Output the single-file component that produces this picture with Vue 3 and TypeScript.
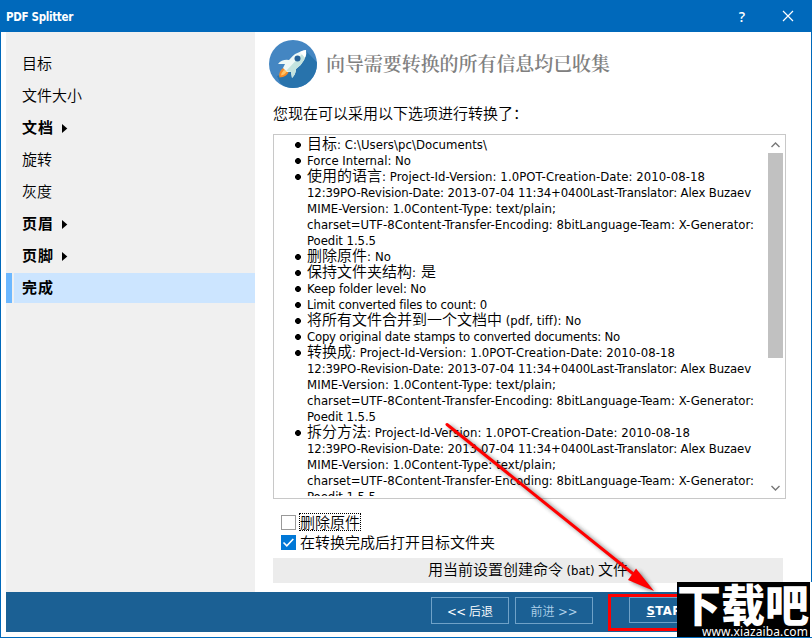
<script setup lang="ts">
import type { Directive } from 'vue'

interface NavItem { label: string; width: number; bold?: boolean; arrow?: boolean; active?: boolean }
interface Line { text: string; width: number; bullet?: boolean }

const nav: NavItem[] = [
  { label: '目标', width: 30 },
  { label: '文件大小', width: 60 },
  { label: '文档', width: 32, bold: true, arrow: true },
  { label: '旋转', width: 30 },
  { label: '灰度', width: 30 },
  { label: '页眉', width: 32, bold: true, arrow: true },
  { label: '页脚', width: 32, bold: true, arrow: true },
  { label: '完成', width: 32, bold: true, active: true },
]

const poLines: Line[] = [
  { text: '12:39PO-Revision-Date: 2013-07-04 11:34+0400Last-Translator: Alex Buzaev', width: 444 },
  { text: 'MIME-Version: 1.0Content-Type: text/plain;', width: 249 },
  { text: 'charset=UTF-8Content-Transfer-Encoding: 8bitLanguage-Team: X-Generator:', width: 447 },
  { text: 'Poedit 1.5.5', width: 69 },
]

const lines: Line[] = [
  { text: '目标: C:\\Users\\pc\\Documents\\', width: 180, bullet: true },
  { text: 'Force Internal: No', width: 104, bullet: true },
  { text: '使用的语言: Project-Id-Version: 1.0POT-Creation-Date: 2010-08-18', width: 398, bullet: true },
  ...poLines,
  { text: '删除原件: No', width: 84, bullet: true },
  { text: '保持文件夹结构: 是', width: 129, bullet: true },
  { text: 'Keep folder level: No', width: 119, bullet: true },
  { text: 'Limit converted files to count: 0', width: 180, bullet: true },
  { text: '将所有文件合并到一个文档中 (pdf, tiff): No', width: 274, bullet: true },
  { text: 'Copy original date stamps to converted documents: No', width: 313, bullet: true },
  { text: '转换成: Project-Id-Version: 1.0POT-Creation-Date: 2010-08-18', width: 368, bullet: true },
  ...poLines,
  { text: '拆分方法: Project-Id-Version: 1.0POT-Creation-Date: 2010-08-18', width: 383, bullet: true },
  ...poLines,
]

// Splits a label into CJK and Latin runs so that each gets its own metrics.
const runs = (text: string) =>
  (text.match(/[\u4e00-\u9fff]+|[^\u4e00-\u9fff]+/g) ?? []).map((t) => ({ t, cjk: /[\u4e00-\u9fff]/.test(t) }))

// Spreads the Latin runs of a label so that it fills the given width.
const vFit: Directive<HTMLElement, number> = {
  mounted(el, { value }) {
    const latin = Array.from(el.querySelectorAll<HTMLElement>('.latin'))
    const targets = latin.length ? latin : [el]
    const count = targets.reduce((n, e) => n + (e.textContent ?? '').length, 0)
    const gap = (value - el.getBoundingClientRect().width) / count
    targets.forEach((e) => { e.style.letterSpacing = `${gap.toFixed(4)}px` })
  },
}
</script>

<template>
  <div class="window">
    <header class="titlebar">
      <span v-fit="67" class="title">PDF Splitter</span>
      <span class="help">?</span>
      <svg class="close" width="12" height="12" viewBox="0 0 12 12"><path d="M1 1L11 11M11 1L1 11" stroke="#fff" stroke-width="1.2" /></svg>
    </header>

    <div class="body">
      <nav class="sidebar">
        <div v-for="item in nav" :key="item.label" class="nav-item" :class="{ bold: item.bold, active: item.active }">
          <span v-fit="item.width">{{ item.label }}</span>
          <svg v-if="item.arrow" class="caret" width="6" height="9" viewBox="0 0 6 9"><path d="M0 0L5.3 4.5L0 9Z" /></svg>
        </div>
      </nav>

      <main class="content">
        <div class="heading">
          <svg class="rocket" width="48" height="48" viewBox="0 0 48 48">
            <circle cx="24" cy="24" r="24" fill="#4486c2" />
            <path d="M37 11L47.8 22A24 24 0 0 1 24 48Q17 48 11.5 43.5L8 36L24 30Z" fill="#2873ac" />
            <path d="M14 28Q9 32 10.5 37.500Q18 37 20 31Z" fill="#f58b28" />
            <path d="M15 30Q12 33 12 35.500Q16 35 18 31Z" fill="#ffc365" />
            <path d="M9 24Q13 19 20 20Q26 12 37 10Q38 21 27 29Q27 34 23 38L22 32L18 32L14 28L16 24Z" fill="#eef8f6" />
            <path d="M37 10Q38 21 27 29Q27 34 23 38L22 32L17 31Z" fill="#c3e3df" />
            <path d="M37 10Q38 14 36 18Q32 13 31 12Q34 10 37 10Z" fill="#fff" />
            <circle cx="28.5" cy="18.5" r="3" fill="#27639a" />
          </svg>
          <h1 v-fit="284">向导需要转换的所有信息均已收集</h1>
        </div>
        <p class="intro"><span v-fit="255">您现在可以采用以下选项进行转换了：</span></p>

        <section class="summary">
          <div class="lines">
            <div v-for="(line, i) in lines" :key="i" class="line" :class="{ bullet: line.bullet }">
              <span v-fit="line.width" class="line-text"><span v-for="(r, j) in runs(line.text)" :key="j" :class="r.cjk ? 'cjk' : 'latin'">{{ r.t }}</span></span>
            </div>
          </div>
          <div class="scrollbar">
            <svg width="9" height="6" viewBox="0 0 9 6"><path d="M.5 5L4.5 1L8.5 5" /></svg>
            <div class="thumb"></div>
            <svg width="9" height="6" viewBox="0 0 9 6"><path d="M.5 1L4.5 5L8.5 1" /></svg>
          </div>
        </section>

        <div class="checks">
          <label class="check"><i class="box"></i><span class="focus"><span v-fit="60">删除原件</span></span></label>
          <label class="check">
            <svg class="box-on" width="15" height="15" viewBox="0 0 15 15"><rect width="15" height="15" fill="#0078d7" /><path d="M2.5 7.5L5.8 10.8L12.3 4" fill="none" stroke="#fff" stroke-width="1.6" /></svg>
            <span v-fit="195" class="open-label">在转换完成后打开目标文件夹</span>
          </label>
        </div>
        <div class="bat"><span v-fit="200"><span class="cjk">用当前设置创建命令</span><span class="latin"> (bat) </span><span class="cjk">文件</span></span></div>
      </main>
    </div>

    <footer class="footer">
      <button class="btn"><span v-fit="46"><span class="latin">&lt;&lt; </span><span class="small">后退</span></span></button>
      <button class="btn dim"><span v-fit="47"><span class="small">前进</span><span class="latin"> &gt;&gt;</span></span></button>
      <button class="btn start"><span v-fit="43"><u>S</u>TART</span></button>
    </footer>

    <div class="marker"></div>
    <svg class="arrow" width="230" height="190" viewBox="0 0 230 190">
      <defs><filter id="soft" x="-10%" y="-10%" width="130%" height="130%"><feGaussianBlur stdDeviation="2" /></filter></defs>
      <g filter="url(#soft)" opacity=".6" transform="translate(3 2)">
        <path d="M7 5L195 155" stroke="#333" stroke-width="3.5" />
        <path d="M214 172L189.500 161L197 150Z" fill="#333" />
      </g>
      <path d="M8 5.500L195 155.500" stroke="#f00" stroke-width="3" stroke-linecap="round" />
      <path d="M215 172L189 161L193 155.500L197 149.500Z" fill="#f00" />
    </svg>
    <aside class="badge">
      <div class="badge-name">下载吧</div>
      <div class="badge-url"><span v-fit="106">www.xiazaiba.com</span></div>
    </aside>
  </div>
</template>

<style>
body { margin: 0; background: #fff; overflow: hidden; }
</style>

<style scoped>
* { box-sizing: border-box; }
.window { position: relative; width: 812px; height: 638px; display: flex; flex-direction: column; overflow: hidden; background: #fff; border: 1px solid #0069bb; border-top: 0; border-right: 0; color: #000; font: 13px "DejaVu Sans Condensed", "DejaVu Sans", "Noto Sans CJK SC", sans-serif; font-stretch: condensed; }
span { white-space: pre; }
.titlebar { flex: none; height: 32px; margin: 0 0 0 -1px; padding: 0 18px 0 6px; background: #0069bb; color: #fff; display: flex; align-items: center; }
.title { font-size: 11.5px; font-weight: 700; line-height: 32px; padding-top: 1px; }
.help { margin-left: auto; width: 10px; margin-right: 35px; text-align: center; font: 600 14px "Open Sans", sans-serif; }
.close { flex: none; }
.body { flex: none; height: 560px; padding-left: 5px; display: flex; border-right: 1px solid #0069bb; }
.sidebar { flex: none; width: 249px; padding-top: 16px; background: #f0f0f0; }
.nav-item { height: 32px; display: flex; align-items: center; padding: 0 0 3px 16px; font: 350 15px/29px "Noto Sans CJK SC", sans-serif; }
.nav-item.bold { font-weight: 700; }
.nav-item.active { height: 30px; margin-top: 1px; padding: 0 0 3px 10px; border-left: 6px solid #6db8ff; background: linear-gradient(90deg, #f0f0f0 2px, #cce5ff 2px); }
.caret { margin-left: 8px; margin-top: 3px; }
.content { flex: none; width: 530px; padding: 8px 0 0 18px; }
.heading { height: 48px; margin-left: -4px; display: flex; align-items: center; gap: 9px; }
.rocket { flex: none; }
h1 { margin: -3px 0 0; flex: none; white-space: nowrap; color: #808080; font: 600 19px/28px "Noto Serif CJK SC", "Noto Sans CJK SC", serif; }
.intro { margin: 0; height: 46px; padding-top: 13px; font: 350 15px/24px "Noto Sans CJK SC", sans-serif; }
.summary { width: 513px; height: 365px; border: 1px solid #c8c8c8; display: flex; padding: 0 1px 2px 0; overflow: hidden; }
.lines { flex: 1; height: 361px; padding-top: 2px; overflow: hidden; }
.line { height: 16px; line-height: 16px; display: flex; align-items: center; padding-left: 33px; }
.line-text { height: 16px; display: flex; align-items: flex-start; }
.line.bullet::before { content: ""; width: 6px; height: 6px; margin: 0 6px 0 -12px; flex: none; background: #000; clip-path: polygon(33% 0, 67% 0, 100% 33%, 100% 67%, 67% 100%, 33% 100%, 0 67%, 0 33%); }
.cjk { font: 350 15px/16px "Noto Sans CJK SC", sans-serif; }
.line .cjk { line-height: 12px; }
.scrollbar { flex: none; width: 17px; padding: 7px 1px 5px 1px; display: flex; flex-direction: column; align-items: center; }
.scrollbar svg { flex: none; fill: none; stroke: #777; stroke-width: 1.4; }
.thumb { flex: none; width: 15px; height: 205px; margin: 5px 0 auto; background: #c1c1c1; }
.checks { padding: 13px 0 0 8px; height: 59px; }
.check { display: flex; align-items: center; height: 20px; font: 350 15px/16px "Noto Sans CJK SC", sans-serif; }
.box { flex: none; width: 15px; height: 15px; border: 1px solid #999; }
.focus { margin-left: 3px; height: 18px; line-height: 15px; border: 1px dotted #000; }
.box-on { flex: none; }
.open-label { margin-left: 4px; padding-bottom: 1px; }
.bat { width: 510px; height: 25px; background: #ececec; text-align: center; line-height: 26px; }
.footer { flex: none; height: 40px; margin: 0 6px 0 5px; background: #1b6094; display: flex; gap: 6px; padding: 5px 0 0 425px; }
.btn { flex: none; width: 78px; height: 27px; padding: 0; border: 1px solid #6fa2c8; background: transparent; color: #fff; font: inherit; line-height: 25px; white-space: nowrap; }
.btn .small { font: 350 12px/25px "Noto Sans CJK SC", sans-serif; }
.btn.dim { color: #afd0e9; }
.btn.start { margin-left: 30px; font-weight: 700; height: 26px; }
.marker { position: absolute; left: 607px; top: 594px; width: 100px; height: 37px; border: 3px solid #f00; }
.arrow { position: absolute; left: 438px; top: 419px; }
.badge { position: absolute; left: 676px; top: 582px; width: 135px; height: 56px; color: #fff; background: linear-gradient(90deg, #000 133px, #fff 133px); overflow: hidden; }
.badge-name { height: 43px; font: 900 44px/43px "Noto Sans CJK SC", sans-serif; white-space: nowrap; }
.badge-url { height: 13px; padding-left: 25px; font: 12px/13px "Noto Sans", sans-serif; }
</style>
